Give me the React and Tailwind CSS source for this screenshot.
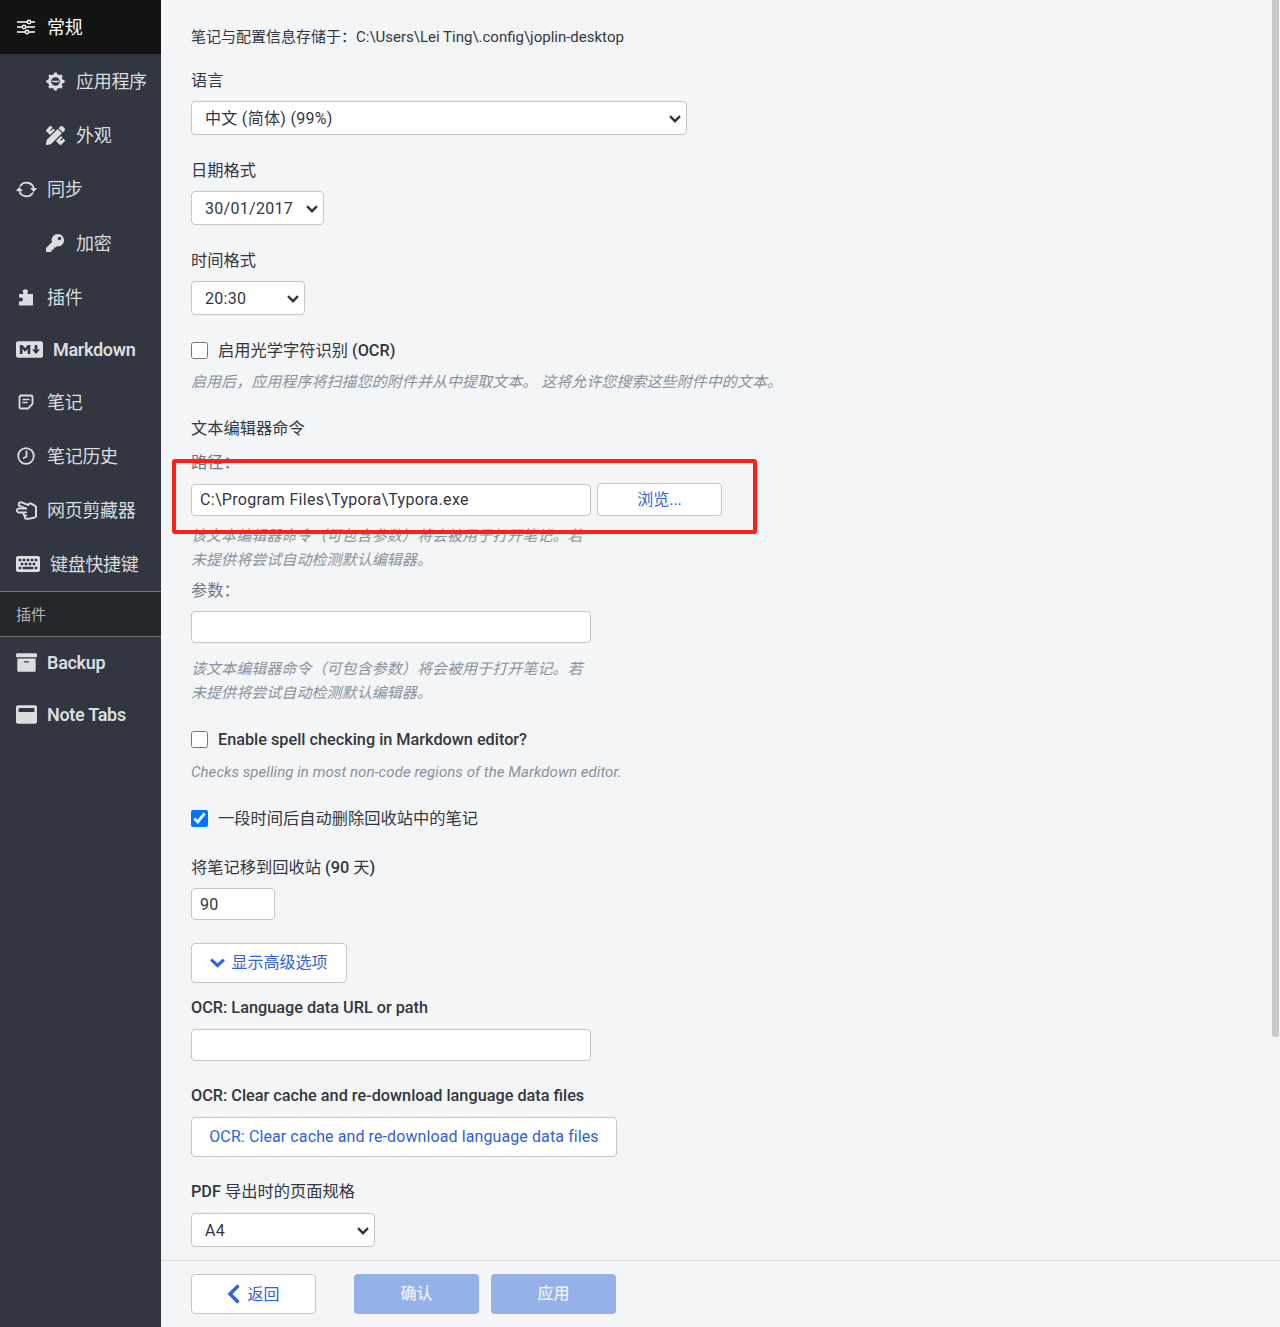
import React from "react";
import { FaPencilRuler, FaKey, FaMarkdown, FaRegHandScissors, FaKeyboard, FaArchive, FaWindowMaximize } from "react-icons/fa";

const cjk = "font-['Roboto','Noto_Sans_CJK_SC',sans-serif]";

const SlidersIcon = () => (
  <svg width="18" height="16" viewBox="0 0 18 16" fill="none" stroke="currentColor" strokeWidth="1.5">
    <path d="M0 3h18M0 8h18M0 13h18" />
    <circle cx="12" cy="3" r="1.7" fill="#131313" />
    <circle cx="7" cy="8" r="1.7" fill="#131313" />
    <circle cx="10" cy="13" r="1.7" fill="#131313" />
  </svg>
);

const CogIcon = () => (
  <svg width="19" height="19" viewBox="0 0 20 20" fill="none" stroke="currentColor">
    <circle cx="10" cy="10" r="6.2" strokeWidth="3.2" />
    <path strokeWidth="3" d="M10 0.5v3M10 16.5v3M0.5 10h3M16.5 10h3M3.3 3.3l2.1 2.1M14.6 14.6l2.1 2.1M3.3 16.7l2.1-2.1M14.6 5.4l2.1-2.1" />
    <path strokeWidth="1.6" d="M6.5 10h7" />
  </svg>
);

const SyncIcon = () => (
  <svg width="21" height="21" viewBox="0 0 21 21" fill="none" stroke="currentColor" strokeWidth="1.8">
    <path d="M4 7.5A7.5 7.5 0 0 1 17.7 9" />
    <path d="M17 13.5A7.5 7.5 0 0 1 3.3 12" />
    <path fill="currentColor" stroke="none" d="M14.2 9h7l-3.5 4zM-.2 12h7l-3.5-4z" />
  </svg>
);

const PuzzleIcon = () => (
  <svg width="16" height="17" viewBox="0 0 16 17" fill="currentColor">
    <path d="M1 5h4.5c0-1-.8-1.3-.8-2.5C4.7 1 6 .2 7.3.2S10 1 10 2.5c0 1.2-.8 1.5-.8 2.5H15v11.5H1v-4h1.5c1.5 0 2.5-.8 2.5-2s-1-2-2.5-2H1z" />
  </svg>
);

const NoteIcon = () => (
  <svg width="16" height="16" viewBox="0 0 16 16" fill="none" stroke="currentColor" strokeWidth="1.8">
    <path d="M3 1.5h10A1.5 1.5 0 0 1 14.5 3v7L10 14.5H3A1.5 1.5 0 0 1 1.5 13V3A1.5 1.5 0 0 1 3 1.5z" />
    <path strokeWidth="1.4" d="M4.5 5.5h7M4.5 8.5h5" />
  </svg>
);

const ClockIcon = () => (
  <svg width="18" height="18" viewBox="0 0 18 18" fill="none" stroke="currentColor" strokeWidth="1.8">
    <circle cx="9" cy="9" r="7.8" />
    <path d="M9.5 3.5V9.5L6 11.5" />
  </svg>
);

const NavItem = ({ icon, label, h = "h-[54px]", pl = "pl-[17px]", w = "w-[20px]", gap = "gap-[10px]", active, bold }) => (
  <div className={`flex items-center ${h} ${pl} ${gap} ${active ? "bg-[#131313] text-white" : "text-[#dcdddf]"}`}>
    <span className={`flex justify-start shrink-0 ${w}`}>{icon}</span>
    <span className={`text-[18px] ${bold ? "font-semibold tracking-[-0.3px]" : "tracking-[-0.3px]"}`}>{label}</span>
  </div>
);

const Sidebar = () => (
  <div className="w-[161px] shrink-0 h-full bg-[#313640]">
    <NavItem active icon={<SlidersIcon />} label="常规" />
    <NavItem pl="pl-[46px]" icon={<CogIcon />} label="应用程序" />
    <NavItem pl="pl-[46px]" icon={<FaPencilRuler size={19} />} label="外观" />
    <NavItem pl="pl-[16px]" w="w-[21px]" icon={<SyncIcon />} label="同步" />
    <NavItem pl="pl-[46px]" icon={<FaKey size={18} />} label="加密" />
    <NavItem pl="pl-[18px]" w="w-[19px]" icon={<PuzzleIcon />} label="插件" />
    <NavItem h="h-[51px]" pl="pl-[16px]" w="w-[27px]" icon={<FaMarkdown size={27} />} label="Markdown" bold />
    <NavItem pl="pl-[18px]" w="w-[19px]" icon={<NoteIcon />} label="笔记" />
    <NavItem pl="pl-[17px]" icon={<ClockIcon />} label="笔记历史" />
    <NavItem pl="pl-[16px]" w="w-[21px]" icon={<FaRegHandScissors size={21} />} label="网页剪藏器" />
    <NavItem pl="pl-[16px]" w="w-[24px]" icon={<FaKeyboard size={24} />} label="键盘快捷键" />
    <div className="h-[46px] flex items-center pl-[16px] pt-[3px] bg-[#24272c] border-y border-[#74777c] text-[15px] text-[#b4b6b9]">插件</div>
    <NavItem h="h-[51px]" pl="pl-[16px]" w="w-[21px]" icon={<FaArchive size={21} />} label="Backup" bold />
    <NavItem h="h-[52px]" pl="pl-[16px]" w="w-[21px]" icon={<FaWindowMaximize size={21} />} label="Note Tabs" bold />
  </div>
);

const Label = ({ className = "", children }) => (
  <div className={`h-6 pt-px leading-6 text-[16.25px] ${className}`}>{children}</div>
);

const Help = ({ className = "", children }) => (
  <div className={`translate-y-px leading-6 text-[15px] italic tracking-[0.06px] text-[#8791a1] ${className}`}>{children}</div>
);

const Select = ({ className = "", value }) => (
  <div className={`relative h-[34px] ${className}`}>
    <select defaultValue={value} className="block w-full h-full appearance-none pl-[13px] pt-[2px] bg-white border border-[#c4c6c9] rounded-[4px] text-[16px] tracking-[0.3px] text-[#32373f]">
      <option>{value}</option>
    </select>
    <svg className="absolute right-[6px] top-[14px]" width="12" height="8" viewBox="0 0 12 8" fill="none" stroke="#32373f" strokeWidth="2.4">
      <path d="M1 1.2l5 5 5-5" />
    </svg>
  </div>
);

const Input = ({ className = "", value = "" }) => (
  <input readOnly value={value} className={`block h-[32px] px-2 bg-white border border-[#c4c6c9] rounded-[4px] text-[16px] tracking-[0.3px] text-[#32373f] ${className}`} />
);

const Check = ({ className = "", checked, children }) => (
  <label className={`flex items-center h-6 text-[16.25px] ${className}`}>
    <input type="checkbox" readOnly checked={!!checked} className="w-[17px] h-[17px] m-0" />
    <span className="ml-[10px] translate-y-px">{children}</span>
  </label>
);

const Button = ({ className = "", children }) => (
  <button className={`flex items-center justify-center bg-white border border-[#c4c6c9] rounded-[4px] text-[16px] text-[#2f62d6] ${className}`}>
    {children}
  </button>
);

export default function App() {
  return (
    <div className={`flex h-[1327px] w-[1280px] overflow-hidden bg-[#f4f5f6] text-[#32373f] ${cjk}`}>
      <Sidebar />
      <div className="relative flex-1 flex flex-col min-w-0">
        <div className="flex-1 min-h-0 overflow-hidden pl-[30px] pt-[24px]">
          <div className="h-6 pt-px leading-6 text-[15px]">笔记与配置信息存储于：C:\Users\Lei Ting\.config\joplin-desktop</div>

          <Label className="mt-[20px]">语言</Label>
          <Select className="mt-[9px] w-[496px]" value="中文 (简体) (99%)" />

          <Label className="mt-[23px]">日期格式</Label>
          <Select className="mt-[9px] w-[133px]" value="30/01/2017" />

          <Label className="mt-[23px]">时间格式</Label>
          <Select className="mt-[9px] w-[114px]" value="20:30" />

          <Check className="mt-[23px]">启用光学字符识别 <span className="font-medium">(OCR)</span></Check>
          <Help className="mt-[7px]">启用后，应用程序将扫描您的附件并从中提取文本。 这将允许您搜索这些附件中的文本。</Help>

          <Label className="mt-[23px]">文本编辑器命令</Label>
          <Label className="mt-[10px] text-[#6f7680]">路径：</Label>
          <div className="flex items-center gap-[6px] mt-[9px]">
            <Input className="w-[400px]" value="C:\Program Files\Typora\Typora.exe" />
            <Button className="w-[125px] h-[33px]">浏览...</Button>
          </div>
          <Help className="mt-[7px] w-[400px]">该文本编辑器命令（可包含参数）将会被用于打开笔记。若未提供将尝试自动检测默认编辑器。</Help>
          <Label className="mt-[7px] text-[#6f7680]">参数：</Label>
          <Input className="mt-[9px] w-[400px]" />
          <Help className="mt-[13px] w-[400px]">该文本编辑器命令（可包含参数）将会被用于打开笔记。若未提供将尝试自动检测默认编辑器。</Help>

          <Check className="mt-[23px]"><span className="font-medium">Enable spell checking in Markdown editor?</span></Check>
          <Help className="mt-[8px]">Checks spelling in most non-code regions of the Markdown editor.</Help>

          <Check className="mt-[23px]" checked>一段时间后自动删除回收站中的笔记</Check>

          <Label className="mt-[25px]">将笔记移到回收站 <span className="font-medium">(90</span> 天<span className="font-medium">)</span></Label>
          <Input className="mt-[9px] w-[84px]" value="90" />

          <Button className="mt-[23px] w-[156px] h-[40px] gap-[6px]">
            <svg width="15" height="10" viewBox="0 0 15 10" fill="none" stroke="currentColor" strokeWidth="3.2">
              <path d="M1.2 1.6l6.3 6 6.3-6" />
            </svg>
            <span>显示高级选项</span>
          </Button>

          <Label className="mt-[12px] font-medium">OCR: Language data URL or path</Label>
          <Input className="mt-[10px] w-[400px]" />

          <Label className="mt-[22px] font-medium">OCR: Clear cache and re-download language data files</Label>
          <Button className="mt-[10px] w-[426px] h-[40px] tracking-[0.1px]">OCR: Clear cache and re-download language data files</Button>

          <Label className="mt-[22px]"><span className="font-medium">PDF</span> 导出时的页面规格</Label>
          <Select className="mt-[10px] w-[184px]" value="A4" />
        </div>

        <div className="h-[67px] shrink-0 border-t border-[#dcdde0] flex items-center pl-[30px]">
          <Button className="w-[125px] h-[40px] gap-[6px]">
            <svg width="14" height="20" viewBox="0 0 14 20" fill="none" stroke="currentColor" strokeWidth="3.4">
              <path d="M11.5 1.5L3 10l8.5 8.5" />
            </svg>
            <span className="translate-y-px">返回</span>
          </Button>
          <button className="ml-[38px] w-[125px] h-[40px] rounded-[4px] bg-[#94b1e8] text-[#eef2fb] text-[16px] font-medium">确认</button>
          <button className="ml-[12px] w-[125px] h-[40px] rounded-[4px] bg-[#94b1e8] text-[#eef2fb] text-[16px] font-medium">应用</button>
        </div>

        {/* scrollbar thumb */}
        <div className="absolute top-0 right-[1px] w-[7px] h-[1037px] bg-[#c8c9cb] rounded-b-[3px]" />
        {/* red annotation box */}
        <div className="absolute left-[11px] top-[459px] w-[585px] h-[75px] border-[4px] border-[#fe2118] rounded-[3px]" />
      </div>
    </div>
  );
}
